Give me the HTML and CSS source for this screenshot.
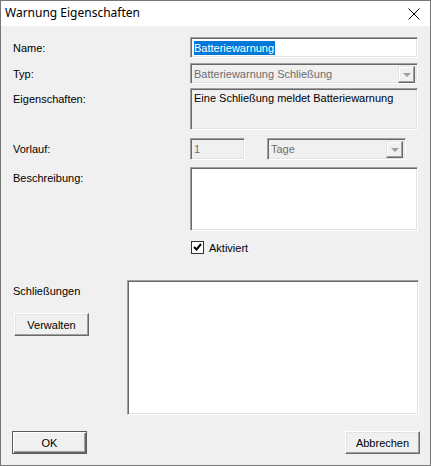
FILE: index.html
```html
<!DOCTYPE html>
<html lang="de">
<head>
<meta charset="utf-8">
<title>Warnung Eigenschaften</title>
<link rel="stylesheet" href="styles.css">
</head>
<body>
<div class="window">
  <div class="titlebar">
    <span class="title">Warnung Eigenschaften</span>
    <svg class="close" width="12" height="12" viewBox="0 0 12 12"><path d="M0.5 0.5 L11.5 11.5 M11.5 0.5 L0.5 11.5" stroke="#000" stroke-width="1" fill="none"/></svg>
  </div>
  <div class="client">
    <div class="row r-name">
      <label class="lbl">Name:</label>
      <div class="edit wide"><span class="sel">Batteriewarnung</span></div>
    </div>
    <div class="row r-typ">
      <label class="lbl">Typ:</label>
      <div class="edit wide disabled combo"><span class="ctext">Batteriewarnung Schließung</span><span class="dropbtn"><span class="arrow"></span></span></div>
    </div>
    <div class="row r-eig">
      <label class="lbl">Eigenschaften:</label>
      <div class="edit wide readonly area-eig">Eine Schließung meldet Batteriewarnung</div>
    </div>
    <div class="row r-vor">
      <label class="lbl">Vorlauf:</label>
      <div class="edit small disabled"><span class="ctext">1</span></div>
      <div class="edit mid disabled combo"><span class="ctext">Tage</span><span class="dropbtn"><span class="arrow"></span></span></div>
    </div>
    <div class="row r-bes">
      <label class="lbl">Beschreibung:</label>
      <div class="edit wide area-bes"></div>
    </div>
    <div class="row r-chk">
      <span class="lbl"></span>
      <span class="checkbox"><svg width="9" height="9" viewBox="0 0 9 9"><path d="M1 4 L3.5 6.5 L8 1" stroke="#000" stroke-width="2" fill="none"/></svg></span>
      <span class="chklabel">Aktiviert</span>
    </div>
    <div class="row r-sch">
      <div class="sch-left">
        <span class="lbl2">Schließungen</span>
        <button class="btn verwalten">Verwalten</button>
      </div>
      <div class="edit list"></div>
    </div>
    <div class="row r-btns">
      <button class="btn default">OK</button>
      <button class="btn cancel">Abbrechen</button>
    </div>
  </div>
</div>
</body>
</html>
```
FILE: styles.css
```css
* { box-sizing: border-box; }
html, body { margin: 0; padding: 0; background: #f0f0f0; }
body { font-family: "Liberation Sans", Arial, sans-serif; font-size: 11px; color: #000; }
.window {
  width: 431px; height: 466px;
  border: 1px solid #767676;
  background: #f0f0f0;
  display: flex; flex-direction: column;
}
.titlebar {
  height: 25px; background: #fff;
  display: flex; align-items: center; justify-content: space-between;
  padding: 0 10px 0 4px;
}
.title { font-family: "Noto Sans", "Open Sans", sans-serif; font-size: 12px; color: #000; position: relative; top: -1px; }
.close { display: block; margin-top: 1px; }
.client { flex: 1; padding: 11px 11px 0 11px; display: flex; flex-direction: column; }
.row { display: flex; align-items: flex-start; }
.lbl { width: 178px; flex: none; padding-left: 1px; }
.edit {
  background: #fff;
  border: 1px solid; border-color: #a0a0a0 #fff #fff #a0a0a0;
  box-shadow: inset 1px 1px 0 #696969, inset -1px -1px 0 #e3e3e3;
  height: 21px; padding: 3px 3px 0 3px;
  position: relative;
}
.wide { width: 228px; }
.small { width: 55px; }
.mid { width: 139px; margin-left: 22px; }
.disabled, .readonly { background: #f0f0f0; }
.disabled { color: #6d6d6d; }
.combo { display: flex; }
.ctext { line-height: 14px; }
.sel { background: #0078d7; color: #fff; display: inline-block; line-height: 14px; padding: 0 1px 0 0; }
.dropbtn {
  position: absolute; right: 2px; top: 2px; width: 17px; height: 17px;
  background: #f0f0f0;
  border: 1px solid; border-color: #e3e3e3 #696969 #696969 #e3e3e3;
  box-shadow: inset -1px -1px 0 #a0a0a0, inset 1px 1px 0 #fff;
  display: flex; align-items: center; justify-content: center;
}
.arrow { width: 0; height: 0; border-left: 4px solid transparent; border-right: 4px solid transparent; border-top: 4px solid #a0a0a0; margin-top: 1px; }
.lbl { line-height: 14px; padding-top: 4px; }
.r-typ { margin-top: 5px; }
.r-eig { margin-top: 4px; }
.area-eig { height: 42px; }
.r-vor { margin-top: 8px; }
.r-vor .edit { height: 22px; }
.r-bes { margin-top: 7px; }
.area-bes { height: 64px; }
.r-chk { margin-top: 9px; align-items: center; height: 15px; }
.checkbox {
  width: 13px; height: 13px; background: #fff;
  border: 1px solid #333;
  display: flex; align-items: center; justify-content: center;
  margin-left: 1px;
}
.checkbox svg { display: block; }
.chklabel { margin-left: 5px; }
.r-sch { margin-top: 25px; }
.sch-left { width: 115px; flex: none; display: flex; flex-direction: column; align-items: flex-start; }
.lbl2 { padding-left: 1px; line-height: 14px; padding-top: 4px; }
.list { width: 292px; height: 135px; }
.btn {
  font-family: "Liberation Sans", Arial, sans-serif; font-size: 11px; color: #000;
  background: #f0f0f0;
  border: 1px solid; border-color: #fff #696969 #696969 #fff;
  box-shadow: inset -1px -1px 0 #a0a0a0, inset 1px 1px 0 #e3e3e3;
  height: 23px; width: 75px; padding: 0; margin: 0;
}
.verwalten { margin-top: 15px; margin-left: 2px; }
.default { border: 1px solid #5a5a5a; box-shadow: inset 1px 1px 0 #fff, inset -1px -1px 0 #696969, inset -2px -2px 0 #a0a0a0; }
.r-btns { margin-top: 16px; justify-content: space-between; }
.cancel { margin-right: -1px; }
```
